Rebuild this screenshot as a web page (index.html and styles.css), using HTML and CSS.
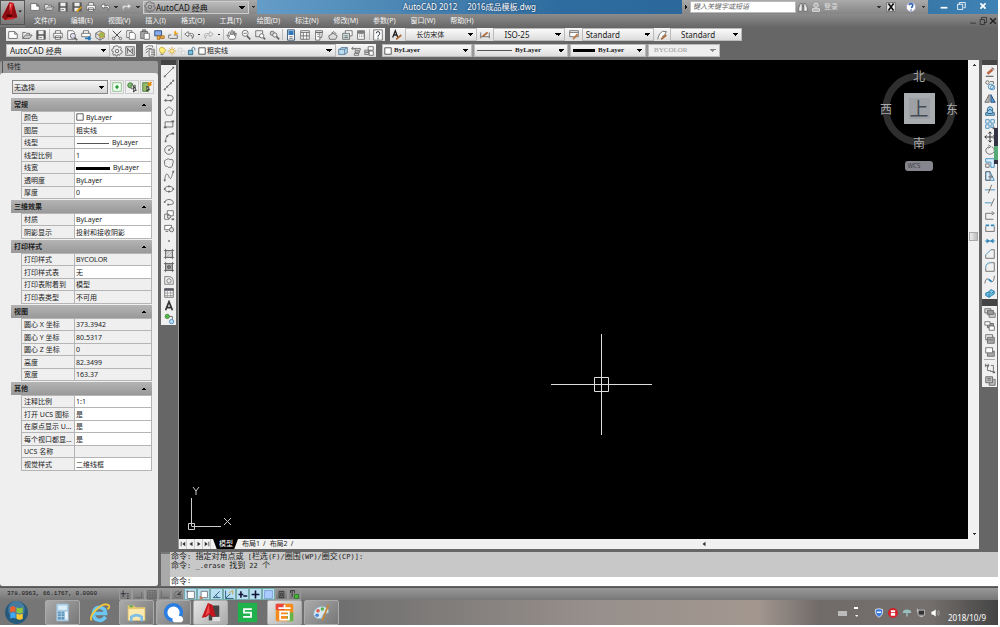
FILE: index.html
```html
<!DOCTYPE html>
<html lang="zh-CN">
<head>
<meta charset="utf-8">
<title>AutoCAD 2012 - 2016成品模板.dwg</title>
<link rel="stylesheet" href="styles.css">
</head>
<body>
<svg class="defs" aria-hidden="true">
<symbol id="new" viewBox="0 0 14 14"><path fill="#fff" d="M2 3h7l3 3v5H2zM9 3v3h3"/></symbol>
<symbol id="open" viewBox="0 0 14 14"><path fill="#eee" d="M2 11V4h3l1 1h4v2"/><path fill="#ccc" d="M2 11l3-4h8l-3 4z"/></symbol>
<symbol id="save" viewBox="0 0 14 14"><path fill="#555" d="M2 2h10v10H2z"/><path fill="#eee" stroke="none" d="M4 2h6v4H4zM4 8h6v4H4z"/><path d="M5 10h3"/></symbol>
<symbol id="saveas" viewBox="0 0 14 14"><path fill="#555" d="M2 2h10v10H2z"/><path fill="#eee" stroke="none" d="M4 2h6v4H4zM4 8h5v4H4z"/><path stroke="#d90" stroke-width="2" d="M7 12l5-5"/></symbol>
<symbol id="print" viewBox="0 0 14 14"><path fill="#fff" d="M4 5V2h6v3M2 10V5h10v5zM4 8h6v4H4z"/></symbol>
<symbol id="preview" viewBox="0 0 14 14"><path fill="#fff" d="M2 12V2h6l2 2v8z"/><circle fill="#dde" cx="8" cy="8" r="3"/><path stroke-width="2" d="M10 10l3 3"/></symbol>
<symbol id="publish" viewBox="0 0 14 14"><path fill="#fff" d="M4 5V2h6v3M2 9V5h10v4z"/><path stroke="#27b" stroke-width="2" d="M6 11h6M10 9l2 2-2 2"/></symbol>
<symbol id="dwf" viewBox="0 0 14 14"><path fill="#ddd" d="M2 5l5-3 5 3v5l-5 3-5-3zM2 5l5 3 5-3M7 8v5"/><circle cx="9" cy="7" r="3" fill="#9b5" stroke="#c93"/></symbol>
<symbol id="cut" viewBox="0 0 14 14"><path stroke="#333" d="M2 2l8 8M12 2l-8 8"/><circle cx="3" cy="11" r="1.5"/><circle cx="11" cy="11" r="1.5"/></symbol>
<symbol id="copy" viewBox="0 0 14 14"><path fill="#fff" d="M2 2h6v8H2z"/><path fill="#fff" d="M5 4h5l2 2v6H5z"/></symbol>
<symbol id="paste" viewBox="0 0 14 14"><path fill="#aaa" d="M2 3h8v8H2zM4 1h4v2H4z"/><path fill="#fff" d="M6 5h6v7H6z"/></symbol>
<symbol id="match" viewBox="0 0 14 14"><path fill="#8ae" stroke="#247" d="M2 2h8v6H2z"/><path fill="#eb5" stroke="#a61" d="M5 8h3v4H5zM9 8h4v3H9z"/></symbol>
<symbol id="block" viewBox="0 0 14 14"><path d="M2 11V7h3M3 11h9V7H8"/><path stroke="#e90" d="M10 2v5M8 5h5M8 3l4 3"/></symbol>
<symbol id="undo" viewBox="0 0 14 14"><path fill="#fff" d="M6 3L2 6l4 3V7h3q2 0 2 4 2-3 1-5-1-1-6-1z"/></symbol>
<symbol id="redo" viewBox="0 0 14 14"><path fill="#eee" stroke="#aaa" d="M8 3l4 3-4 3V7H5q-2 0-2 4-2-3-1-5 1-1 6-1z"/></symbol>
<symbol id="pan" viewBox="0 0 14 14"><path fill="#fff" d="M4 12L1 7q1-1 3 2L3 4q1-1 2 0l1 3V2h2v5l1-4h1v5l1-3h1l-1 5-1 2z"/></symbol>
<symbol id="zoom" viewBox="0 0 14 14"><circle cx="6" cy="5" r="3.5" fill="#fff"/><path stroke-width="2" d="M8 8l4 4"/><path d="M4 5h4"/></symbol>
<symbol id="zoomwin" viewBox="0 0 14 14"><path d="M2 2h8v7H2z"/><circle cx="9" cy="8" r="2.5" fill="#fff"/><path stroke-width="2" d="M11 10l2 2"/></symbol>
<symbol id="zoomprev" viewBox="0 0 14 14"><circle cx="5" cy="5" r="2.5" fill="#ccc"/><circle cx="8" cy="7" r="2.5" fill="#eee"/><path stroke-width="2" d="M10 9l3 3"/></symbol>
<symbol id="props" viewBox="0 0 14 14"><path fill="#fff" stroke="#246" d="M3 1h8v12H3z"/><path fill="#37b" stroke="none" d="M4 2h6v5H4z"/><path d="M5 9h4M5 11h4"/></symbol>
<symbol id="design" viewBox="0 0 14 14"><path fill="#fff" d="M2 2h10v10H2zM2 4h10M5 4v8M9 4v8M2 8h10"/></symbol>
<symbol id="palette" viewBox="0 0 14 14"><path fill="#fff" d="M3 2h8v2H3zM3 4h5v9H3zM8 4h3l-1 6H8M5 6h2M5 9h2"/></symbol>
<symbol id="sheet" viewBox="0 0 14 14"><path fill="#ddd" d="M2 8l5-3 5 3-2 4H3zM5 5l3-2 3 3"/></symbol>
<symbol id="markup" viewBox="0 0 14 14"><path fill="#fff" d="M5 2h8v6H5z"/><path fill="#cdd" d="M2 5h8v7H2zM4 8h4M4 10h4"/></symbol>
<symbol id="calc" viewBox="0 0 14 14"><path fill="#fff" d="M3 2h8v10H3z"/><path fill="#888" d="M4 3h6v2H4z"/><path stroke-dasharray="1" d="M5 7h5M5 9h5"/></symbol>
<symbol id="help" viewBox="0 0 14 14"><path fill="#fff" d="M2 1h10v12H2z"/><path stroke="#123" d="M5 5q0-2 2-2t2 2-2 3v1M7 10v2"/></symbol>
<symbol id="textstyle" viewBox="0 0 14 14"><path stroke="#222" stroke-width="1.5" d="M2 10l3-8 3 8M3 7h4"/><path stroke="#a63" stroke-width="2" d="M6 12l6-5"/></symbol>
<symbol id="dimstyle" viewBox="0 0 14 14"><path d="M2 4v7M12 4v7M2 9h10"/><path stroke="#a63" stroke-width="2" d="M4 9l6-5"/></symbol>
<symbol id="tablestyle" viewBox="0 0 14 14"><path fill="#fff" d="M2 2h10v7H2zM2 4h10"/><path stroke="#b74" stroke-width="2" d="M6 12l5-6"/></symbol>
<symbol id="leader" viewBox="0 0 14 14"><path fill="#fff" d="M2 12l2-6q3-5 8-3-1 5-5 6"/><path stroke="#a63" stroke-width="2" d="M6 12l6-5"/></symbol>
<symbol id="gear" viewBox="0 0 14 14"><path d="M6 1h2l1 2 2-1 1 2-1 2 2 1v2l-2 1-1 2-2-1-1 2H6l-1-2-2 1-1-2 1-2-2-1V5l2-1 0-2z"/><circle cx="7" cy="7" r="2"/></symbol>
<symbol id="mygear" viewBox="0 0 14 14"><path fill="#ddd" d="M2 2h10v10H2z"/><path d="M4 10V4l3 4 3-4v6M3 3l8 8"/></symbol>
<symbol id="layerprop" viewBox="0 0 14 14"><path fill="#fff" d="M2 3l3-2h5v2M2 6l3-2h4M2 9l3-2M6 5h6v8H6zM8 7h4M8 9h4M8 11h4"/></symbol>
<symbol id="bulb" viewBox="0 0 14 14"><path fill="#fe7" stroke="#b93" d="M5 9Q2 6 4 3t6 0 0 6v1H5z"/><path d="M5 12h4"/></symbol>
<symbol id="sun" viewBox="0 0 14 14"><circle cx="7" cy="7" r="3" fill="#fe9" stroke="#c93"/><path stroke="#c93" d="M7 1v2M7 11v2M1 7h2M11 7h2M3 3l1 1M11 3l-1 1M3 11l1-1M11 11l-1-1"/></symbol>
<symbol id="frost" viewBox="0 0 14 14"><path stroke="#ccc" fill="#eee" d="M2 3h5v5H2zM6 7h5v5H6z"/></symbol>
<symbol id="unlock" viewBox="0 0 14 14"><path fill="#7bd" stroke="#157" d="M2 6h6v6H2z"/><path stroke="#157" d="M7 6V3q2-3 4 0v3"/></symbol>
<symbol id="swatch" viewBox="0 0 14 14"><path fill="#fff" stroke="#222" d="M2.500 2.500h9v9h-9z"/></symbol>
<symbol id="layercur" viewBox="0 0 14 14"><path fill="#bde" stroke="#579" d="M2 11V5h7v6zM3 5l2-2h7v6l-3 2M9 5l3-2"/></symbol>
<symbol id="layerprev" viewBox="0 0 14 14"><path fill="#fff" d="M6 4h6v2H6zM6 7h5v2H6zM5 10h5v2H5zM2 4h4M2 4l2-2M2 4l2 2"/></symbol>
<symbol id="layerstate" viewBox="0 0 14 14"><path fill="#fff" d="M6 2h6v4H6zM2 6h5v2H2zM2 9h5v2H2zM7 7h5v5H7z"/></symbol>
<symbol id="line" viewBox="0 0 14 14"><path d="M2 12L12 2"/><path stroke-width="2" d="M1 12h2M11 2h2"/></symbol>
<symbol id="xline" viewBox="0 0 14 14"><path d="M2 12L12 2"/><path stroke-width="2" d="M4 9h2M8 5h2M1 12h2M11 2h2"/></symbol>
<symbol id="pline" viewBox="0 0 14 14"><path d="M2 10h7q3 0 3-3T8 4H6M2 10l2-2"/><path stroke-width="2" d="M5 4h2M2 10h2M8 10h2"/></symbol>
<symbol id="polygon" viewBox="0 0 14 14"><path stroke="#777" d="M7 2l5 4-2 6H4L2 6z"/></symbol>
<symbol id="rect" viewBox="0 0 14 14"><path d="M2.500 4.500h9v6h-9z"/><path stroke-width="2" d="M1 11h3M10 4h3"/></symbol>
<symbol id="arc" viewBox="0 0 14 14"><path d="M3 12Q3 4 11 3"/><path stroke-width="2" d="M2 12h2M4 6h2M10 3h3"/></symbol>
<symbol id="circle" viewBox="0 0 14 14"><circle cx="7" cy="7" r="5"/><path d="M7 7l3-3"/><path stroke-width="2" d="M6 7h2"/></symbol>
<symbol id="cloud" viewBox="0 0 14 14"><path d="M4 3q2-2 4 0 4-1 4 2t-1 3q1 4-3 4-2 1-3-1-4 0-3-4-2-3 2-4z"/></symbol>
<symbol id="spline" viewBox="0 0 14 14"><path d="M2 12C3 3 5 3 7 8S10 8 12 2"/><path stroke-width="2" d="M1 12h2M11 2h2"/></symbol>
<symbol id="ellipse" viewBox="0 0 14 14"><ellipse cx="7" cy="7" rx="5" ry="3"/><path stroke-width="2" d="M1 7h2M11 7h2M6 4h2M6 10h2"/></symbol>
<symbol id="earc" viewBox="0 0 14 14"><path d="M2 7q1-3 5-3t5 3-4 3H6"/><path stroke-width="2" d="M1 7h2M5 10h2"/></symbol>
<symbol id="insert" viewBox="0 0 14 14"><path fill="#fff" d="M5 2h7v6H5zM2 6h5v6H2z"/><circle cx="7" cy="9" r="2" fill="#ddd"/><path stroke-width="2" d="M10 12h3"/></symbol>
<symbol id="make" viewBox="0 0 14 14"><path fill="#fff" d="M2 4h8v5H2z"/><circle cx="10" cy="9" r="2.500" fill="#ddd"/><path d="M3 11h3"/></symbol>
<symbol id="point" viewBox="0 0 14 14"><path stroke="none" fill="#666" d="M6 6h2v2H6z"/></symbol>
<symbol id="hatch" viewBox="0 0 14 14"><path fill="#ddd" d="M3 3h8v8H3zM1 3h12M1 11h12M3 1v12M11 1v12"/><path stroke="#aaa" d="M3 8l5-5M4 11l7-7"/></symbol>
<symbol id="gradient" viewBox="0 0 14 14"><path fill="#bbb" d="M3 3h8v8H3zM1 3h12M1 11h12M3 1v12M11 1v12"/><circle cx="7" cy="7" r="2" fill="#777"/></symbol>
<symbol id="region" viewBox="0 0 14 14"><path fill="#eee" stroke="#777" d="M2 3h5q4 0 5 4v5H2z"/><circle cx="7" cy="8" r="2.500" stroke="#777"/></symbol>
<symbol id="table" viewBox="0 0 14 14"><path fill="#fff" d="M2 2h10v10H2z"/><path fill="#557" d="M2 2h10v2H2z"/><path stroke="#999" d="M5 4v8M9 4v8M2 7h10M2 10h10"/></symbol>
<symbol id="mtext" viewBox="0 0 14 14"><path stroke="#333" stroke-width="2" d="M3 12l4-10 4 10M5 9h4"/></symbol>
<symbol id="addsel" viewBox="0 0 14 14"><circle cx="5" cy="4" r="2.500" fill="#5b4" stroke="#484"/><path d="M7 4h4v4"/><circle cx="10" cy="10" r="2.500" fill="#bdf" stroke="#48b"/></symbol>
<symbol id="erase" viewBox="0 0 14 14"><path stroke="#b64" stroke-width="3" d="M4 9l6-5"/><path stroke="#333" d="M2 12h9M9 2l3 2"/></symbol>
<symbol id="copyobj" viewBox="0 0 14 14"><circle cx="4" cy="4" r="2"/><circle cx="8" cy="9" r="3" stroke="#38b"/><circle cx="10" cy="10" r="2.500" stroke="#38b"/><path d="M7 3h4v3"/></symbol>
<symbol id="mirror" viewBox="0 0 14 14"><path fill="#bbb" d="M6 3v9H1z"/><path fill="#59c" stroke="#247" d="M8 3v9h5z"/></symbol>
<symbol id="offset" viewBox="0 0 14 14"><path fill="#9ce" stroke="#257" d="M2 12V9h2q-1-7 3-7t3 7h2v3zM4 10h6M5 7q2-4 4 0"/></symbol>
<symbol id="array" viewBox="0 0 14 14"><path stroke="#38b" d="M2 2h4v4H2zM8 2h4v4H8zM2 8h4v4H2zM8 8h3v3H8z"/><path stroke-width="2" d="M10 12h3"/></symbol>
<symbol id="move" viewBox="0 0 14 14"><path stroke="#222" d="M7 1v12M1 7h12M5 3l2-2 2 2M5 11l2 2 2-2M3 5L1 7l2 2M11 5l2 2-2 2"/></symbol>
<symbol id="rotate" viewBox="0 0 14 14"><path d="M9 3q4 2 3 6-2 3-6 3-4-1-4-5 1-3 4-4M5 1l3 2-3 2"/></symbol>
<symbol id="scale" viewBox="0 0 14 14"><path fill="#def" stroke="#38b" d="M2 2h10v10H8V6H2z"/><path d="M2 8h4v4H2z"/></symbol>
<symbol id="stretch" viewBox="0 0 14 14"><path fill="#def" stroke="#38b" d="M2 2h5l5 10H2z"/><path d="M2 2h5v10H2zM5 8h5M8 6l2 2-2 2"/></symbol>
<symbol id="trim" viewBox="0 0 14 14"><path stroke="#38b" d="M1 8h4M9 8h4"/><path d="M5 12l4-10M5 8h4"/></symbol>
<symbol id="extend" viewBox="0 0 14 14"><path stroke="#38b" d="M1 8h8"/><path d="M8 12l4-9"/></symbol>
<symbol id="break1" viewBox="0 0 14 14"><path d="M10 5H2v7h9M9 3l3 2-3 2"/></symbol>
<symbol id="break2" viewBox="0 0 14 14"><path d="M2 5v6h10V5"/><path stroke="#38b" stroke-width="2" d="M2 4h4M8 4h4"/></symbol>
<symbol id="join" viewBox="0 0 14 14"><path stroke="#38b" d="M1 7h12"/><path fill="#38b" stroke="none" d="M3 4l4 3-4 3zM11 4L7 7l4 3z"/></symbol>
<symbol id="chamfer" viewBox="0 0 14 14"><path d="M2 8v4h10V2H8"/><path stroke="#38b" d="M2 8l6-6"/></symbol>
<symbol id="fillet" viewBox="0 0 14 14"><path d="M2 8v4h10V2H8"/><path stroke="#38b" d="M2 8q0-6 6-6"/></symbol>
<symbol id="blend" viewBox="0 0 14 14"><path d="M1 11q1-7 4-5M9 9q3 0 3-7"/><path stroke="#38b" stroke-width="2" d="M5 6l4 3"/></symbol>
<symbol id="explode" viewBox="0 0 14 14"><path fill="#6bd" stroke="#27a" d="M2 7l3-1 3-3 4 2v3l-3 2-3 2-4-2zM5 6l4 1 3-2M6 12V8"/></symbol>
<symbol id="front" viewBox="0 0 14 14"><path fill="#ddd" d="M1 2h7v5H1zM6 7h7v5H6z"/><path fill="#999" d="M4 4h7v5H4z"/></symbol>
<symbol id="back" viewBox="0 0 14 14"><path fill="#999" d="M4 4h7v5H4z"/><path fill="#fff" d="M1 2h6v4H1zM6 7h6v5H6z"/></symbol>
<symbol id="above" viewBox="0 0 14 14"><path fill="#eee" d="M2 2h8v6H2z"/><path fill="#aaa" d="M4 5h8v7H4zM5 8h6"/></symbol>
<symbol id="under" viewBox="0 0 14 14"><path fill="#aaa" d="M4 6h8v6H4z"/><path fill="#fff" d="M2 2h8v6H2z"/></symbol>
<symbol id="textfront" viewBox="0 0 14 14"><path d="M1 4h5M8 4h3v7H7M2 2v4M5 2v4M4 4v6h4"/><path stroke-width="2" d="M10 12h3"/></symbol>
<symbol id="hatchback" viewBox="0 0 14 14"><path fill="#bbb" d="M2 2h8v7H2zM4 4h4M4 6h4M11 5h2v7H6v-3"/></symbol>
<symbol id="pick" viewBox="0 0 14 14"><path stroke="#8b8" fill="#efe" d="M2 2h10v10H2z"/><path stroke="#293" stroke-width="2" d="M7 5v4M5 7h4"/></symbol>
<symbol id="selobj" viewBox="0 0 14 14"><circle cx="5" cy="5" r="3" fill="#7b6" stroke="#474"/><path fill="#cdb" d="M6 5h5v4H6z"/><path fill="#fff" stroke="#222" d="M9 6v7l1-2h2z"/></symbol>
<symbol id="qsel" viewBox="0 0 14 14"><path fill="#9b6" stroke="#474" d="M2 2h7v10H2z"/><path stroke="#e80" stroke-width="2" d="M8 2l4 3M12 1l-3 5"/><path fill="#fff" stroke="#222" d="M7 6v6l1-2h2z"/></symbol>
<symbol id="snap" viewBox="0 0 14 14"><path stroke="#223" d="M4 2v8M1 6h7M9 6h2M9 9h2M9 12h2"/></symbol>
<symbol id="infer" viewBox="0 0 14 14"><path d="M3 11h8V4"/></symbol>
<symbol id="grid" viewBox="0 0 14 14"><path d="M2 2h11v11H2zM5 2v11M8 2v11M11 2v11M2 5h11M2 8h11M2 11h11"/></symbol>
<symbol id="ortho" viewBox="0 0 14 14"><path d="M3 2v9h9"/></symbol>
<symbol id="polar" viewBox="0 0 14 14"><circle cx="7" cy="7" r="4"/><path stroke="#222" d="M7 7l5-4M7 7h4"/></symbol>
<symbol id="osnap" viewBox="0 0 14 14"><path fill="#fff" d="M3 3h9v9H3z"/><path stroke-width="2" d="M2 3h2"/></symbol>
<symbol id="osnap3" viewBox="0 0 14 14"><path fill="#fff" d="M4 3h8v8H4z"/><path stroke="#c75" stroke-width="2" d="M3 9v3h3"/></symbol>
<symbol id="track" viewBox="0 0 14 14"><path stroke="#146" d="M11 3l-8 8h9M6 8q2 1 2 3"/></symbol>
<symbol id="ducs" viewBox="0 0 14 14"><path stroke="#146" d="M2 2v10h10M2 12l6-6"/><path stroke="#c93" d="M6 5l5-3v5"/></symbol>
<symbol id="dyn" viewBox="0 0 14 14"><path stroke="#113" stroke-width="2" d="M5 3v8M2 7h6M8 9h5"/></symbol>
<symbol id="lwt" viewBox="0 0 14 14"><path stroke="#113" stroke-width="2" d="M7 2v10M2 7h10"/></symbol>
<symbol id="tpy" viewBox="0 0 14 14"><path fill="#acf" stroke="#79c" d="M2 2h10v10H2z"/></symbol>
<symbol id="quick" viewBox="0 0 14 14"><path stroke="#222" d="M4 3h6v8H4zM6 5h2v4H6z"/></symbol>
<symbol id="cycle" viewBox="0 0 14 14"><path stroke="#222" d="M2 5V2h5v3M4 2v8"/><path fill="#4b3" stroke="#272" d="M7 7h5v5H7z"/></symbol>
</svg>

<div class="app">
<header class="top">
  <button class="logo" aria-label="应用程序菜单"><svg viewBox="0 0 24 24"><path fill="#d8232a" d="M9 1l4 1 4 15-5 2-8 1-3-3z"/><path fill="#8e0d12" d="M9 1l1 12-5 7-4-3zM13 2l4 15-4 1-2-6z"/><path fill="#f58080" d="M9 3l2 0-2 8z"/><path fill="#500" d="M6 14h6v3H6z"/><path fill="#222" d="M18 10h4l-2 2z"/></svg></button>
  <div class="heads">
    <div class="title">
      <div class="quick">
        <button aria-label="新建"><svg class="ico"><use href="#new"/></svg></button><button aria-label="打开"><svg class="ico"><use href="#open"/></svg></button><button aria-label="保存"><svg class="ico"><use href="#save"/></svg></button><button aria-label="另存为"><svg class="ico"><use href="#saveas"/></svg></button><button aria-label="打印"><svg class="ico"><use href="#print"/></svg></button><button aria-label="放弃"><svg class="ico"><use href="#undo"/></svg></button><button class="drop" aria-label="放弃列表"></button><button aria-label="重做"><svg class="ico"><use href="#redo"/></svg></button><button class="drop" aria-label="重做列表"></button>
        <span class="combo w106"><svg class="ico"><use href="#gear"/></svg><select aria-label="工作空间"><option>AutoCAD 经典</option></select></span>
        <button class="drop" aria-label="自定义"></button>
      </div>
      <h1 class="caption"><span>AutoCAD 2012</span><span>2016成品模板.dwg</span></h1>
      <div class="info">
        <button class="play" aria-label="展开"></button>
        <input type="search" aria-label="搜索" placeholder="键入关键字或短语">
        <button aria-label="查找"><svg class="ico" viewBox="0 0 14 14"><path fill="#eee" d="M2 12V8l2-5h2v9zM8 12V3h2l2 5v4zM6 6h2"/></svg></button>
        <button class="login"><svg class="ico" viewBox="0 0 14 14"><circle cx="7" cy="5" r="2.500" fill="#aaa" stroke="#eee"/><path fill="#aaa" stroke="#eee" d="M3 12V9h8v3z"/></svg>登录</button>
        <span class="fill"></span>
        <button class="drop" aria-label="登录菜单"></button>
        <button aria-label="Exchange"><svg class="ico" viewBox="0 0 14 14"><path fill="#eee" d="M2 2h10v10H2z"/><path stroke="#111" stroke-width="2" d="M4 3l6 8M10 3l-6 8"/></svg></button>
        <button class="q" aria-label="帮助"><svg class="ico" viewBox="0 0 14 14"><circle cx="7" cy="7" r="5.500" fill="#fff" stroke="#99b"/><path stroke="#36a" stroke-width="2" d="M5 5q0-2 2-2t2 2-2 3M7 10v1"/></svg></button>
        <button class="drop" aria-label="帮助菜单"></button>
      </div>
      <div class="winbtns">
        <button aria-label="最小化"><svg class="ico" viewBox="0 0 14 14"><path stroke="#fff" stroke-width="2" d="M3 9h8"/></svg></button><button aria-label="还原"><svg class="ico" viewBox="0 0 14 14"><path stroke="#fff" d="M5 5V3h7v6h-2M3 5h6v6H3z"/></svg></button><button class="close" aria-label="关闭"><svg class="ico" viewBox="0 0 14 14"><path stroke="#fff" stroke-width="2" d="M4 4l6 6M10 4l-6 6"/></svg></button>
      </div>
    </div>
    <nav class="menu">
      <button>文件(F)</button><button>编辑(E)</button><button>视图(V)</button><button>插入(I)</button><button>格式(O)</button><button>工具(T)</button><button>绘图(D)</button><button>标注(N)</button><button>修改(M)</button><button>参数(P)</button><button>窗口(W)</button><button>帮助(H)</button>
      <span class="docbtns"><button aria-label="最小化图形"><svg class="ico" viewBox="0 0 14 14"><path d="M3 10h8"/></svg></button><button aria-label="还原图形"><svg class="ico" viewBox="0 0 14 14"><path d="M5 5V2h7v7H9M3 5h6v7H3z"/></svg></button><button aria-label="关闭图形"><svg class="ico" viewBox="0 0 14 14"><path stroke-width="2" d="M3 3l8 8M11 3l-8 8"/></svg></button></span>
    </nav>
  </div>
</header>

<div class="bars">
  <div class="row">
    <div class="bar wide">
      <button aria-label="新建"><svg class="ico"><use href="#new"/></svg></button><button aria-label="打开"><svg class="ico"><use href="#open"/></svg></button><button aria-label="保存"><svg class="ico"><use href="#save"/></svg></button><i></i>
      <button aria-label="打印"><svg class="ico"><use href="#print"/></svg></button><button aria-label="打印预览"><svg class="ico"><use href="#preview"/></svg></button><button aria-label="发布"><svg class="ico"><use href="#publish"/></svg></button><button aria-label="三维DWF"><svg class="ico"><use href="#dwf"/></svg></button><i></i>
      <button aria-label="剪切"><svg class="ico"><use href="#cut"/></svg></button><button aria-label="复制"><svg class="ico"><use href="#copy"/></svg></button><button aria-label="粘贴"><svg class="ico"><use href="#paste"/></svg></button><button aria-label="特性匹配"><svg class="ico"><use href="#match"/></svg></button><button aria-label="块编辑器"><svg class="ico"><use href="#block"/></svg></button><i></i>
      <button aria-label="放弃"><svg class="ico"><use href="#undo"/></svg></button><button class="drop" aria-label="放弃列表"></button><button aria-label="重做"><svg class="ico"><use href="#redo"/></svg></button><button class="drop" aria-label="重做列表"></button><i></i>
      <button aria-label="平移"><svg class="ico"><use href="#pan"/></svg></button><button aria-label="缩放"><svg class="ico"><use href="#zoom"/></svg></button><button aria-label="窗口缩放"><svg class="ico"><use href="#zoomwin"/></svg></button><button aria-label="上一个"><svg class="ico"><use href="#zoomprev"/></svg></button><i></i>
      <button aria-label="特性"><svg class="ico"><use href="#props"/></svg></button><button aria-label="设计中心"><svg class="ico"><use href="#design"/></svg></button><button aria-label="工具选项板"><svg class="ico"><use href="#palette"/></svg></button><button aria-label="图纸集"><svg class="ico"><use href="#sheet"/></svg></button><button aria-label="标记集"><svg class="ico"><use href="#markup"/></svg></button><button aria-label="计算器"><svg class="ico"><use href="#calc"/></svg></button><i></i>
      <button aria-label="帮助"><svg class="ico"><use href="#help"/></svg></button>
    </div>
    <div class="bar styles">
      <button aria-label="文字样式"><svg class="ico"><use href="#textstyle"/></svg></button><span class="combo w72"><select class="small" aria-label="文字样式"><option>长仿宋体</option></select></span>
      <button aria-label="标注样式"><svg class="ico"><use href="#dimstyle"/></svg></button><span class="combo w72"><select aria-label="标注样式"><option>ISO-25</option></select></span>
      <button aria-label="表格样式"><svg class="ico"><use href="#tablestyle"/></svg></button><span class="combo w72"><select class="tight" aria-label="表格样式"><option>Standard</option></select></span>
      <button aria-label="多重引线样式"><svg class="ico"><use href="#leader"/></svg></button><span class="combo w72"><select aria-label="多重引线样式"><option>Standard</option></select></span>
    </div>
  </div>
  <div class="row">
    <div class="bar space">
      <span class="combo w104"><select class="tight" aria-label="工作空间"><option>AutoCAD 经典</option></select></span><button aria-label="工作空间设置"><svg class="ico"><use href="#gear"/></svg></button><button aria-label="我的工作空间"><svg class="ico"><use href="#mygear"/></svg></button>
    </div>
    <div class="bar layers">
      <button aria-label="图层特性"><svg class="ico"><use href="#layerprop"/></svg></button>
      <span class="combo w178"><svg class="ico s"><use href="#bulb"/></svg><svg class="ico s"><use href="#sun"/></svg><svg class="ico s"><use href="#frost"/></svg><svg class="ico s"><use href="#unlock"/></svg><svg class="ico s"><use href="#swatch"/></svg><select class="near" aria-label="图层"><option>粗实线</option></select></span>
      <button aria-label="置为当前"><svg class="ico"><use href="#layercur"/></svg></button><button aria-label="上一个图层"><svg class="ico"><use href="#layerprev"/></svg></button><button aria-label="图层状态"><svg class="ico"><use href="#layerstate"/></svg></button>
    </div>
    <div class="bar objprops">
      <span class="combo w90"><svg class="ico s"><use href="#swatch"/></svg><select class="serif" aria-label="颜色"><option>ByLayer</option></select></span>
      <span class="combo w94"><b class="thin"></b><select class="serif" aria-label="线型"><option>ByLayer</option></select></span>
      <span class="combo w76"><b class="thick"></b><select class="serif" aria-label="线宽"><option>ByLayer</option></select></span>
      <span class="combo w72 off"><select class="serif" aria-label="打印样式" disabled><option>BYCOLOR</option></select></span>
    </div>
  </div>
</div>

<main class="work">
  <aside class="palette">
    <h2>特性</h2>
    <div class="pbody">
      <div class="pick">
        <span class="combo"><select aria-label="选择对象"><option>无选择</option></select></span>
        <button aria-label="切换PICKADD"><svg class="ico"><use href="#pick"/></svg></button><button aria-label="选择对象"><svg class="ico"><use href="#selobj"/></svg></button><button aria-label="快速选择"><svg class="ico"><use href="#qsel"/></svg></button>
      </div>
      <section><button class="sec">常规</button>
        <table><tr><th>颜色</th><td><svg class="ico s"><use href="#swatch"/></svg>ByLayer</td></tr><tr><th>图层</th><td>粗实线</td></tr><tr><th>线型</th><td><b class="thin"></b>ByLayer</td></tr><tr><th>线型比例</th><td>1</td></tr><tr><th>线宽</th><td><b class="thick"></b>ByLayer</td></tr><tr><th>透明度</th><td>ByLayer</td></tr><tr><th>厚度</th><td>0</td></tr></table></section>
      <section><button class="sec">三维效果</button>
        <table><tr><th>材质</th><td>ByLayer</td></tr><tr><th>阴影显示</th><td>投射和接收阴影</td></tr></table></section>
      <section><button class="sec">打印样式</button>
        <table><tr><th>打印样式</th><td class="ro">BYCOLOR</td></tr><tr><th>打印样式表</th><td>无</td></tr><tr><th>打印表附着到</th><td class="ro">模型</td></tr><tr><th>打印表类型</th><td class="ro">不可用</td></tr></table></section>
      <section><button class="sec">视图</button>
        <table><tr><th>圆心 X 坐标</th><td class="ro">373.3942</td></tr><tr><th>圆心 Y 坐标</th><td class="ro">80.5317</td></tr><tr><th>圆心 Z 坐标</th><td class="ro">0</td></tr><tr><th>高度</th><td class="ro">82.3499</td></tr><tr><th>宽度</th><td class="ro">163.37</td></tr></table></section>
      <section><button class="sec">其他</button>
        <table><tr><th>注释比例</th><td>1:1</td></tr><tr><th>打开 UCS 图标</th><td>是</td></tr><tr><th>在原点显示 U...</th><td>是</td></tr><tr><th>每个视口都显...</th><td>是</td></tr><tr><th>UCS 名称</th><td class="ro"></td></tr><tr><th>视觉样式</th><td>二维线框</td></tr></table></section>
    </div>
  </aside>

  <div class="right">
    <div class="upper">
      <div class="tools">
        <button aria-label="直线"><svg class="ico"><use href="#line"/></svg></button><button aria-label="构造线"><svg class="ico"><use href="#xline"/></svg></button><button aria-label="多段线"><svg class="ico"><use href="#pline"/></svg></button><button aria-label="多边形"><svg class="ico"><use href="#polygon"/></svg></button><button aria-label="矩形"><svg class="ico"><use href="#rect"/></svg></button><button aria-label="圆弧"><svg class="ico"><use href="#arc"/></svg></button><button aria-label="圆"><svg class="ico"><use href="#circle"/></svg></button><button aria-label="修订云线"><svg class="ico"><use href="#cloud"/></svg></button><button aria-label="样条曲线"><svg class="ico"><use href="#spline"/></svg></button><button aria-label="椭圆"><svg class="ico"><use href="#ellipse"/></svg></button><button aria-label="椭圆弧"><svg class="ico"><use href="#earc"/></svg></button><button aria-label="插入块"><svg class="ico"><use href="#insert"/></svg></button><button aria-label="创建块"><svg class="ico"><use href="#make"/></svg></button><button aria-label="点"><svg class="ico"><use href="#point"/></svg></button><button aria-label="图案填充"><svg class="ico"><use href="#hatch"/></svg></button><button aria-label="渐变色"><svg class="ico"><use href="#gradient"/></svg></button><button aria-label="面域"><svg class="ico"><use href="#region"/></svg></button><button aria-label="表格"><svg class="ico"><use href="#table"/></svg></button><button aria-label="多行文字"><svg class="ico"><use href="#mtext"/></svg></button><button aria-label="添加选定对象"><svg class="ico"><use href="#addsel"/></svg></button>
      </div>
      <div class="drawing">
        <div class="view">
          <div class="canvas">
            <svg class="cube" viewBox="0 0 86 104"><circle cx="43" cy="42" r="33" fill="none" stroke="#2e2e2e" stroke-width="7"/><rect x="28" y="26" width="31" height="31" fill="#a9acae"/><rect x="33" y="31" width="21" height="21" fill="#9da1a5"/><text x="43" y="49" font-size="19" fill="#444b52">上</text><g font-size="12" fill="#a8a8a8"><text x="43" y="14">北</text><text x="10" y="47">西</text><text x="76" y="47">东</text><text x="43" y="81">南</text></g><rect x="29" y="94" width="28" height="10" rx="3" fill="#85858e"/><text x="38" y="101" font-size="6" fill="#3a3a40">WCS</text></svg>
            <svg class="cross" viewBox="0 0 101 101"><path d="M0 50.500h101M50.500 0v101M43.500 43.500h14v14h-14z"/></svg>
            <svg class="ucs" viewBox="0 0 44 46"><path d="M3.500 12v28M3.500 40.500H33M.5 37.500h6v6h-6zM5 1l3 4 3-4M8 5v4M36 32l7 7M43 32l-7 7"/></svg>
          </div>
          <div class="vscroll"><b class="up"></b><b class="thumb"></b><b class="down"></b></div>
        </div>
        <div class="tabs">
          <button aria-label="首个"><svg class="nav" viewBox="0 0 8 8"><path d="M1 1h1v6H1zM7 1v6L3 4z"/></svg></button><button aria-label="上一个"><svg class="nav" viewBox="0 0 8 8"><path d="M6 1v6L2 4z"/></svg></button><button aria-label="下一个"><svg class="nav" viewBox="0 0 8 8"><path d="M2 1v6l4-3z"/></svg></button><button aria-label="末个"><svg class="nav" viewBox="0 0 8 8"><path d="M6 1h1v6H6zM1 1v6l4-3z"/></svg></button>
          <button class="tab on">模型</button><button class="tab">布局1</button><span>/</span><button class="tab">布局2</button><span>/</span>
          <div class="hscroll"><svg class="nav" viewBox="0 0 8 8"><path d="M6 1v6L2 4z"/></svg></div>
        </div>
      </div>
      <div class="edit">
        <div class="tools">
          <button aria-label="删除"><svg class="ico"><use href="#erase"/></svg></button><button aria-label="复制"><svg class="ico"><use href="#copyobj"/></svg></button><button aria-label="镜像"><svg class="ico"><use href="#mirror"/></svg></button><button aria-label="偏移"><svg class="ico"><use href="#offset"/></svg></button><button aria-label="阵列"><svg class="ico"><use href="#array"/></svg></button><button aria-label="移动"><svg class="ico"><use href="#move"/></svg></button><button aria-label="旋转"><svg class="ico"><use href="#rotate"/></svg></button><button aria-label="缩放"><svg class="ico"><use href="#scale"/></svg></button><button aria-label="拉伸"><svg class="ico"><use href="#stretch"/></svg></button><button aria-label="修剪"><svg class="ico"><use href="#trim"/></svg></button><button aria-label="延伸"><svg class="ico"><use href="#extend"/></svg></button><button aria-label="打断于点"><svg class="ico"><use href="#break1"/></svg></button><button aria-label="打断"><svg class="ico"><use href="#break2"/></svg></button><button aria-label="合并"><svg class="ico"><use href="#join"/></svg></button><button aria-label="倒角"><svg class="ico"><use href="#chamfer"/></svg></button><button aria-label="圆角"><svg class="ico"><use href="#fillet"/></svg></button><button aria-label="光顺曲线"><svg class="ico"><use href="#blend"/></svg></button><button aria-label="分解"><svg class="ico"><use href="#explode"/></svg></button>
          <b class="meter"></b>
        </div>
        <div class="tools">
          <button aria-label="前置"><svg class="ico"><use href="#front"/></svg></button><button aria-label="后置"><svg class="ico"><use href="#back"/></svg></button><button aria-label="置于对象之上"><svg class="ico"><use href="#above"/></svg></button><button aria-label="置于对象之下"><svg class="ico"><use href="#under"/></svg></button><hr><button aria-label="注释前置"><svg class="ico"><use href="#textfront"/></svg></button><button aria-label="填充后置"><svg class="ico"><use href="#hatchback"/></svg></button>
        </div>
      </div>
    </div>
    <div class="command">
      <div class="grip"></div>
      <div class="lines">
        <p><span>命令</span>: <span>指定对角点或</span> [<span>栏选</span>(F)/<span>圈围</span>(WP)/<span>圈交</span>(CP)]:</p>
        <p><span>命令</span>: _.erase <span>找到</span> 22 <span>个</span></p>
        <label class="prompt"><span>命令</span>:<input type="text" aria-label="命令"></label>
      </div>
    </div>
  </div>
</main>

<div class="status">
  <span class="coords">378.0963, 66.1767, 0.0000</span>
  <button aria-label="捕捉"><svg class="ico"><use href="#snap"/></svg></button><button aria-label="推断约束"><svg class="ico"><use href="#infer"/></svg></button><button aria-label="栅格"><svg class="ico"><use href="#grid"/></svg></button><button aria-label="正交"><svg class="ico"><use href="#ortho"/></svg></button><button aria-label="极轴"><svg class="ico"><use href="#polar"/></svg></button><button class="on" aria-label="对象捕捉"><svg class="ico"><use href="#osnap"/></svg></button><button class="on" aria-label="三维捕捉"><svg class="ico"><use href="#osnap3"/></svg></button><button class="on" aria-label="追踪"><svg class="ico"><use href="#track"/></svg></button><button class="on" aria-label="动态UCS"><svg class="ico"><use href="#ducs"/></svg></button><button class="on" aria-label="动态输入"><svg class="ico"><use href="#dyn"/></svg></button><button class="on" aria-label="线宽"><svg class="ico"><use href="#lwt"/></svg></button><button class="on" aria-label="透明度"><svg class="ico"><use href="#tpy"/></svg></button><button aria-label="快捷特性"><svg class="ico"><use href="#quick"/></svg></button><button aria-label="选择循环"><svg class="ico"><use href="#cycle"/></svg></button>
</div>

<footer class="taskbar">
  <button class="start" aria-label="开始"><svg viewBox="0 0 24 24"><circle cx="12" cy="12" r="11" fill="#24587c"/><circle cx="12" cy="9" r="8" fill="#5a93b5" opacity=".6"/><path fill="#f0602a" d="M6 7q3-2 5 0v5q-2-2-5 0z"/><path fill="#8cc63f" d="M12 7q3 2 6 0v5q-3 2-6 0z"/><path fill="#3fa9f5" d="M6 13q3-2 5 0v5q-2-2-5 0z"/><path fill="#fdc92f" d="M12 13q3 2 6 0v5q-3 2-6 0z"/></svg></button>
  <button class="task" aria-label="计算器"><svg viewBox="0 0 24 24"><rect x="5" y="2" width="14" height="20" rx="1" fill="#a8cbe4"/><path fill="#dceefa" d="M7 4h10v5H7z"/><path fill="#5f93b8" d="M7 11h3v2H7zM11 11h3v2h-3zM7 14h3v2H7zM11 14h3v2h-3zM7 17h3v3H7zM11 17h3v3h-3z"/><path fill="#eef7fd" d="M15 11h3v9h-3z"/></svg></button>
  <button class="task flat" aria-label="Internet Explorer"><svg viewBox="0 0 24 24"><path fill="none" stroke="#6cc6f4" stroke-width="4" d="M19 17q-3 4-7 4-7-1-7-8 1-7 7-7 7 1 7 7H6"/><path fill="none" stroke="#f6c833" stroke-width="2" d="M3 21Q0 17 8 9T21 3t0 5"/></svg></button>
  <button class="task" aria-label="资源管理器"><svg viewBox="0 0 24 24"><path fill="#e9c96b" d="M2 4h7l2 2h11v15H2z"/><path fill="#fbeab0" d="M3 8h18v13H3z"/><path fill="#5fae4a" d="M4 4h4v2H4z"/><path fill="none" stroke="#7dbfe8" stroke-width="3" d="M6 22v-5q6-4 12 0v5"/></svg></button>
  <button class="task gap" aria-label="QQ浏览器"><svg viewBox="0 0 24 24"><circle cx="12" cy="12" r="9" fill="#fff" stroke="#2a7de1" stroke-width="4"/><path fill="#fff" d="M11 22q-1-5 3-5 2-4 5-1 4 0 4 5l-2 2h-8z"/></svg></button>
  <button class="task lit" aria-label="AutoCAD"><svg viewBox="0 0 24 24"><path fill="#444" d="M10 4h12v17H10z"/><path fill="#ddd" d="M14 17h9v5h-9z"/><path fill="#c4161c" d="M9 1l5 2 4 13-4 1-3-3-4 3-5 1z"/><path fill="#f04a4a" d="M10 2l1 10-5 4z"/></svg></button>
  <button class="task flat" aria-label="WPS 表格"><svg viewBox="0 0 24 24"><rect x="1" y="1" width="22" height="22" fill="#1fb14c"/><path fill="none" stroke="#fff" stroke-width="2" d="M17 8H8v4h8v5H7"/></svg></button>
  <button class="task lit" aria-label="看图"><svg viewBox="0 0 24 24"><rect x="2" y="2" width="20" height="20" rx="2" fill="#f58a1f"/><path fill="#e8453c" d="M2 2h10v7H2z"/><path fill="#63b545" d="M15 12h7v10h-7z"/><path fill="none" stroke="#fff" stroke-width="2" d="M5 7h14M12 3v4M7 11h10v9H7zM7 15h10"/></svg></button>
  <button class="task" aria-label="画图"><svg viewBox="0 0 24 24"><path fill="#d8e6ee" stroke="#8fb0c4" d="M3 14q0-8 9-9 9 0 8 7-2 2-5 1-2 3-3 6-8 1-9-5z"/><circle cx="8" cy="10" r="2" fill="#e05a4a"/><circle cx="13" cy="8" r="2" fill="#59b04a"/><circle cx="7" cy="15" r="2" fill="#4a86d8"/><path stroke="#c8863a" stroke-width="2" d="M13 21l7-18"/></svg></button>
  <div class="tray">
    <svg class="kb" viewBox="0 0 22 14"><path fill="#bbb" d="M0 5h9v5H0z"/><path fill="#fff" d="M16 1h4v2h-4zM17 9h3l-1 2z"/></svg>
    <svg viewBox="0 0 14 14"><path fill="#3a7be0" stroke="#fff" d="M2 2l5-1 5 1v5q-1 4-5 6-4-2-5-6z"/><path stroke="#fff" stroke-width="2" d="M4 6h6"/></svg>
    <svg viewBox="0 0 14 14"><circle cx="7" cy="7" r="7" fill="#d4202a"/><path fill="#fff" d="M4 3h6v3H4zM4 7h6v4H4z"/></svg>
    <svg viewBox="0 0 14 14"><path fill="#9ac0be" d="M1 7q0-5 6-5t6 5H1zM6 7h2v5H6z"/></svg>
    <svg viewBox="0 0 14 14"><path fill="#333" stroke="#ddd" d="M3 3h9v7H3zM5 12h5M2 1v5"/></svg>
    <svg viewBox="0 0 14 14"><path fill="#fff" d="M2 5h2l4-3v10L4 9H2z"/><path fill="none" stroke="#aaa" d="M10 4q2 3 0 6M12 3q2 4 0 8"/></svg>
    <time>2018/10/9</time>
  </div>
</footer>
</div>
</body>
</html>
```
FILE: styles.css
```css
* { box-sizing: border-box; }
body { margin: 0; background: #fff; font: 7px/12px "Noto Sans", "Noto Sans CJK SC", sans-serif; color: #222; }
.defs { position: absolute; width: 0; height: 0; }
.app { display: flex; flex-direction: column; height: 100vh; padding: 0 2px 2px 0; overflow: hidden; }
button, select, input { font: inherit; color: inherit; margin: 0; padding: 0; border: 0; background: none; border-radius: 0; }
button { display: flex; align-items: center; justify-content: center; flex: none; }
.ico { width: 12px; height: 12px; flex: none; fill: none; stroke: #666; stroke-width: 1; }
.ico.s { width: 10px; height: 10px; }
.drop { width: 10px; height: 12px; background: conic-gradient(from -45deg at 50% 100%, #333 90deg, transparent 0) center / 4px 2px no-repeat; }

.combo { display: flex; align-items: center; height: 13px; flex: none; background: linear-gradient(#fafafa, #ddd); border: 1px solid #bbb; }
.combo select { flex: 1; min-width: 0; height: 11px; padding-left: 10px; appearance: none; font-size: 8px; line-height: 11px;
  background: conic-gradient(from -45deg at 50% 100%, #000 90deg, transparent 0) right 3px center / 6px 3px no-repeat; }
.combo select.tight { padding-left: 3px; }
.combo select.small { font-size: 7px; padding-left: 10px; }
.combo select.near { font-size: 7px; padding-left: 0; }
.combo select.serif { font: bold 7px/11px "Liberation Serif", serif; padding-left: 1px; }
.combo.off { background: #eee; }
.combo.off select { color: #999; opacity: 1; font-weight: normal; padding-left: 5px; background-image: conic-gradient(from -45deg at 50% 100%, #888 90deg, transparent 0); }
.w72 { width: 72px; } .w76 { width: 76px; } .w90 { width: 90px; } .w94 { width: 94px; }
.w104 { width: 104px; } .w106 { width: 106px; } .w178 { width: 180px; }
.thin, .thick { display: inline-block; flex: none; vertical-align: middle; height: 1px; background: #555; }
.thick { height: 3px; background: #000; }

.top { display: flex; height: 27px; flex: none; background: #777; }
.logo { width: 25px; height: 25px; background: linear-gradient(#bbb, #777); border: 1px solid #555; }
.logo svg { width: 23px; height: 23px; }
.heads { flex: 1; display: flex; flex-direction: column; min-width: 0; }
.title { display: flex; height: 14px; background: linear-gradient(90deg, #3472a4, #6ba3cc 20%, #2e6c9f 55%, #2a6496 80%, #3f83b4); }
.quick, .info { display: flex; align-items: center; background: linear-gradient(#aaa, #858585); }
.quick { padding-left: 3px; }
.quick > button:not(.drop) { width: 14px; }
.quick > .drop { width: 8px; }
.quick .combo { margin: 0 0 0 1px; background: linear-gradient(#bbb, #999); border-color: #ccc; }
.quick .combo select { padding-left: 0; color: #111; }
.caption { flex: 1; display: flex; justify-content: center; gap: 10px; margin: 0; font-size: 8px; font-weight: 400; line-height: 14px; color: #fff; text-shadow: 0 0 2px #124; }
.info { width: 246px; }
.play { width: 8px; height: 12px; background: conic-gradient(from 225deg at 100% 50%, #111 90deg, transparent 0) center / 3px 6px no-repeat; }
.info input { width: 106px; height: 12px; background: #fff; border: 1px solid #bbb; padding: 0 2px; font-style: italic; font-size: 7px; appearance: none; }
.info input::placeholder { color: #666; opacity: 1; }
.info > button:not(.drop):not(.play) { min-width: 14px; }
.login { gap: 2px; color: #ddd; }
.fill { flex: 1; }
.q { margin-left: 6px; }
.winbtns { display: flex; width: 70px; }
.winbtns button { width: 15px; margin-left: 2px; height: 12px; }
.winbtns button:first-child { margin-left: 8px; }
.winbtns .close { width: 26px; margin-left: 2px; }
.menu { display: flex; align-items: center; gap: 15px; height: 13px; padding-left: 9px; background: linear-gradient(#8c8c8c, #686868); color: #f4f4f4; }
.docbtns { margin-left: auto; display: flex; }
.docbtns .ico { width: 10px; height: 10px; stroke: #222; }

.bars { flex: none; display: flex; flex-direction: column; gap: 3px; padding: 1px 0 3px 6px; background: #666; }
.row { display: flex; }
.bar { display: flex; align-items: center; height: 13px; flex: none; background: linear-gradient(#f7f7f7, #ddd); }
.bar > button { width: 14px; }
.bar > .drop { width: 6px; }
.bar i { width: 1px; height: 11px; margin: 0 1px; background: #bbb; }
.wide { width: 379px; justify-content: space-between; }
.styles { width: 352px; margin-left: 5px; justify-content: space-between; }
.space { width: 130px; }
.space > button { width: 13px; }
.layers { width: 233px; margin-left: 7px; }
.layers > button { width: 13px; }
.objprops { margin-left: 6px; gap: 2px; background: #999; }
.objprops .thin { width: 35px; margin: 0 2px; }
.objprops .thick { width: 22px; margin: 0 2px; }

.work { flex: 1; display: flex; min-height: 0; background: #666; }
.palette { width: 158px; margin: 1px 3px 1px 0; flex: none; display: flex; flex-direction: column; background: #9b9b9b; border-radius: 2px; }
.palette h2 { margin: 0 0 0 2px; padding-left: 4px; border-left: 1px solid #555; font-size: 7px; line-height: 12px; font-weight: 400; height: 12px; }
.pbody { flex: 1; background: #efefef; border-radius: 3px; padding: 7px 6px 0 11px; }
.pick { display: flex; gap: 1px; margin-bottom: 4px; }
.pick .combo { width: 96px; height: 14px; margin: 0 1px; background: linear-gradient(#f6f6f6, #d4d4d4); border-color: #888; }
.pick .combo select { font-size: 7px; padding-left: 1px; }
.pick > button { width: 14px; height: 14px; border: 1px solid #ccc; }
section { display: flex; flex-direction: column; margin-bottom: 1px; }
.sec { height: 13px; justify-content: space-between; padding: 0 5px 0 3px; background: linear-gradient(#b4b4b4, #999); font-weight: 700; }
.sec::after { content: ""; width: 6px; height: 3px; background: conic-gradient(from 135deg at 50% 0, #000 90deg, transparent 0); }
table { margin-left: 10px; border-collapse: collapse; table-layout: fixed; }
tr { height: 12px; }
tr:nth-child(even) { height: 13px; }
th, td { padding: 0 0 0 1px; border: 1px solid #b5b5b5; line-height: 11px; font-weight: 400; text-align: left; white-space: nowrap; }
th { width: 53px; padding-left: 2px; }
td { background: #fff; }
td.ro { background: #efefef; }
td .ico { vertical-align: middle; height: 10px; margin: -2px 1px 0 -1px; }
td .thin { width: 32px; margin: 0 3px 0 1px; }
td .thick { width: 34px; margin: 0 3px 0 0; }

.right { flex: 1; min-width: 0; display: flex; flex-direction: column; }
.upper { flex: 1; min-height: 0; display: flex; align-items: flex-start; }
.tools { width: 15px; padding-top: 5px; background: linear-gradient(#444 5px, #f0f0f0 5px); position: relative; }
.tools button { width: 15px; height: 13px; }
.upper > .tools { margin: 0 2px 0 0; }
.tools hr { margin: 1px 2px; border: 0; height: 1px; background: #aaa; }
.edit { width: 16px; margin-left: 3px; display: flex; flex-direction: column; }
.edit .tools + .tools { padding-top: 7px; background: linear-gradient(#444 7px, #f0f0f0 7px); }
.meter { position: absolute; right: -1px; top: 68px; width: 4px; height: 36px; background: linear-gradient(#334 50%, #5a7 50% 90%, #334 90%); }
.drawing { flex: 1; align-self: stretch; min-width: 0; display: flex; flex-direction: column; margin-bottom: 3px; border-left: 1px solid #999; }
.view { flex: 1; display: flex; min-height: 0; }
.canvas { flex: 1; position: relative; background: #000; }
.cube { position: absolute; right: 6px; top: 7px; width: 86px; height: 104px; font-family: "Noto Sans CJK SC", sans-serif; text-anchor: middle; }
.cross { position: absolute; left: 372px; top: 274px; width: 101px; height: 101px; fill: none; stroke: #ddd; }
.ucs { position: absolute; left: 9px; bottom: 7px; width: 44px; height: 46px; fill: none; stroke: #ccc; }
.vscroll { width: 11px; display: flex; flex-direction: column; align-items: center; justify-content: space-between; padding: 4px 0; background: #f1f1f1; }
.up, .down { width: 4px; height: 2px; background: conic-gradient(from 135deg at 50% 0, #333 90deg, transparent 0); }
.down { background: conic-gradient(from -45deg at 50% 100%, #333 90deg, transparent 0); }
.thumb { width: 9px; height: 9px; margin-bottom: 126px; background: linear-gradient(90deg, #eee, #bbb); border: 1px solid #aaa; }
.tabs { display: flex; height: 10px; background: #f1f1f1; line-height: 10px; }
.tabs > button { width: 8px; height: 10px; border-right: 1px solid #ccc; }
.nav { width: 6px; height: 6px; fill: #333; }
.tabs > .tab { width: auto; padding: 0 3px 0 4px; border: 0; line-height: 10px; }
.tabs > .on { background: #000; color: #fff; padding: 0 5px 0 6px; margin-left: 2px; clip-path: polygon(0 0, 100% 0, 85% 100%, 15% 100%); }
.hscroll { flex: 1; display: flex; align-items: center; padding-left: 51%; }

.command { display: flex; flex: none; margin-bottom: 1px; background: #c8c8c8; }
.grip { width: 9px; background: #aaa; border-top: 2px solid #777; }
.lines { flex: 1; display: flex; flex-direction: column; font: 7px/9px "DejaVu Sans Mono", "Noto Sans CJK SC", monospace; }
.lines span { font-size: 8px; }
.lines p { margin: 0 0 0 1px; height: 9px; white-space: pre; }
.prompt { display: flex; align-items: center; height: 9px; margin-top: 7px; padding-left: 1px; background: #fff; }
.prompt input { flex: 1; height: 9px; }

.status { flex: none; display: flex; align-items: center; height: 13px; background: linear-gradient(#999, #777); border-top: 1px solid #555; }
.coords { width: 119px; padding-left: 7px; font: 6px/12px "Liberation Mono", monospace; color: #111; white-space: nowrap; }
.status button { width: 13px; height: 12px; border: 1px solid #999; }
.status .on { background: #b9dff2; border-color: #7aa; }
.status .ico { width: 11px; height: 11px; }

.taskbar { flex: none; display: flex; align-items: stretch; height: 25px; background: linear-gradient(90deg, #777 0, #6e6e6e 33%, #98908c 60%, #a3978f 76%, #706b69 82%, #75706d 93%, #444 100%); }
.start { width: 32px; margin-right: 13px; }
.start svg { width: 25px; height: 25px; }
.task { width: 35px; margin-right: 2px; border: 1px solid #aaa; border-radius: 2px; background: linear-gradient(135deg, #aaa, #777); }
.task svg { width: 21px; height: 21px; }
.flat { background: none; border-color: transparent; }
.lit { background: linear-gradient(135deg, #e5e5e5, #aaa); }
.tray { margin-left: auto; display: flex; align-items: center; gap: 4px; padding-right: 12px; color: #fff; }
.tray svg { width: 10px; height: 10px; }
.tray .kb { width: 22px; height: 14px; margin-right: 10px; }
.tray time { font-size: 8px; padding-top: 11px; margin-left: 4px; }
```
